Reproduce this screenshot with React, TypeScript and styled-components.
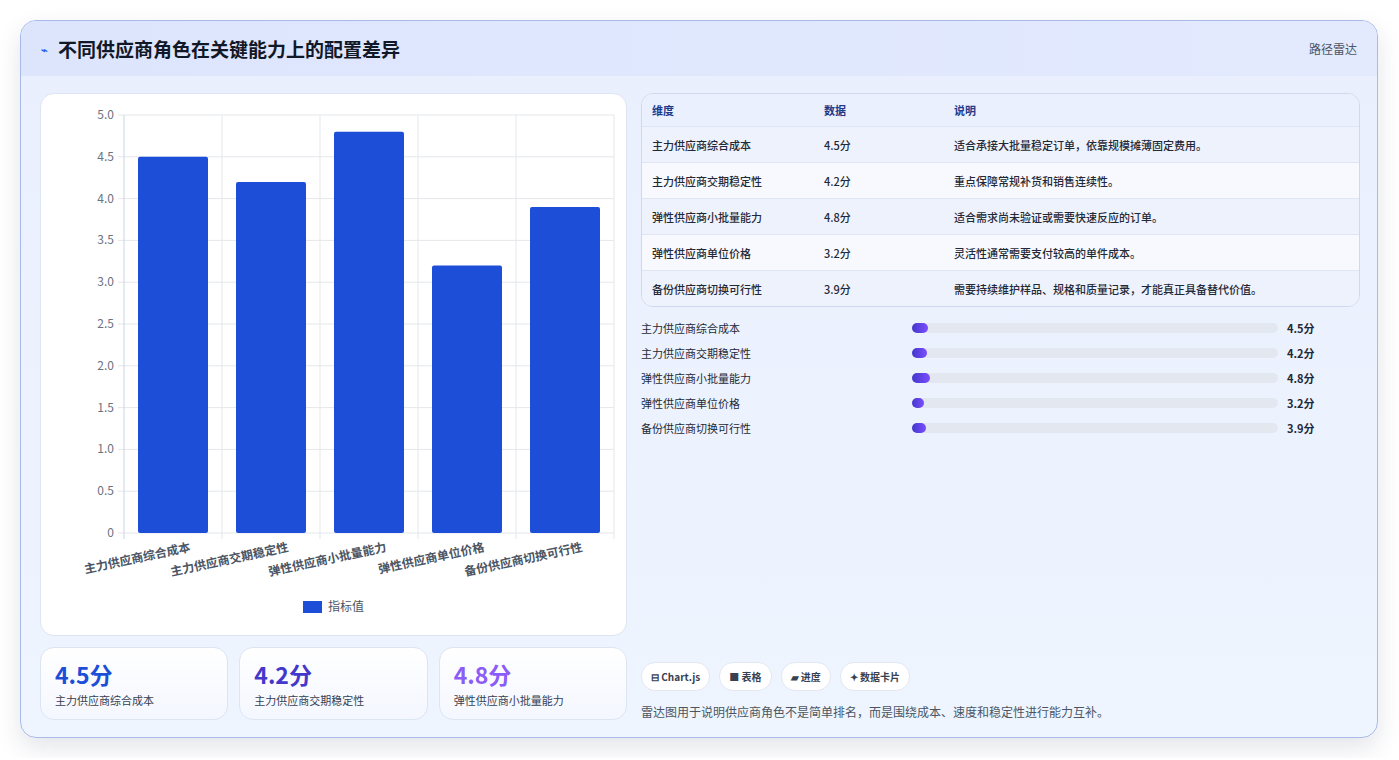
import React from 'react'
import styled, { createGlobalStyle } from 'styled-components'

const FONT = `"Noto Sans CJK SC", "Noto Sans", sans-serif`

const Global = createGlobalStyle`
  body { margin: 0; background: #ffffff; font-family: ${FONT}; }
`

const Page = styled.div`
  padding: 20px 21px 20px 20px;
`

const Panel = styled.div`
  border: 1px solid #a9b9ea;
  border-radius: 16px;
  background: linear-gradient(180deg, #e9effd 0%, #eef5ff 100%);
  box-shadow: 0 10px 24px rgba(30, 40, 80, 0.12);
  overflow: hidden;
  height: 718px;
  box-sizing: border-box;
`

const Header = styled.div`
  height: 55px;
  display: flex;
  align-items: center;
  justify-content: space-between;
  padding: 0 20px;
  background: linear-gradient(90deg, #dde5fd, #e3eafe);
`

const Title = styled.h1`
  margin: 0;
  font-size: 19px;
  font-weight: 700;
  color: #111827;
  display: flex;
  align-items: center;
  gap: 10px;
`

const Icon = styled.span`
  font-size: 11px;
  color: #2563eb;
`

const HeaderTag = styled.span`
  font-size: 12px;
  color: #4b5563;
`

const Body = styled.div`
  display: grid;
  grid-template-columns: 587px 1fr;
  gap: 14px;
  padding: 17px 17px 18px 19px;
`

const Col = styled.div`
  display: flex;
  flex-direction: column;
  gap: 11px;
`

const ChartCard = styled.div`
  height: 543px;
  background: #fff;
  border: 1px solid #dde4f2;
  border-radius: 14px;
  box-sizing: border-box;
`

const Stats = styled.div`
  display: grid;
  grid-template-columns: repeat(3, 1fr);
  gap: 11px;
`

const Stat = styled.div`
  height: 73px;
  box-sizing: border-box;
  border: 1px solid #dde4f2;
  border-radius: 14px;
  background: linear-gradient(180deg, #ffffff, #f4f7ff);
  padding: 10px 14px;
`

const StatValue = styled.div<{ $color: string }>`
  font-size: 23px;
  font-weight: 700;
  color: ${(p) => p.$color};
  line-height: 32px;
`

const StatLabel = styled.div`
  font-size: 11px;
  color: #374151;
  margin-top: 2px;
`

const Right = styled.div`
  display: flex;
  flex-direction: column;
`

const Table = styled.div`
  border: 1px solid #cfd8ee;
  border-radius: 12px;
  overflow: hidden;
  background: #f3f6fe;
`

const Row = styled.div<{ $head?: boolean; $alt?: boolean }>`
  display: grid;
  grid-template-columns: 172px 130px 1fr;
  height: ${(p) => (p.$head ? 32 : 35)}px;
  align-items: center;
  padding-left: 10px;
  font-size: 11px;
  font-weight: ${(p) => (p.$head ? 700 : 500)};
  color: ${(p) => (p.$head ? '#1e3a8a' : '#1f2937')};
  background: ${(p) => (p.$head ? '#eaf0fe' : p.$alt ? '#f7f9fe' : '#eef2fd')};
  border-top: ${(p) => (p.$head ? 'none' : '1px solid #dfe5f3')};
`

const Bars = styled.div`
  display: flex;
  flex-direction: column;
  gap: 7px;
  margin-top: 12px;
  padding-right: 33px;
`

const BarRow = styled.div`
  display: grid;
  grid-template-columns: 271px 1fr 40px;
  align-items: center;
  font-size: 11px;
  color: #1f2937;
  height: 18px;
`

const Track = styled.div`
  height: 10px;
  border-radius: 5px;
  background: #e3e7f0;
  margin-right: 9px;
`

const Fill = styled.div`
  height: 100%;
  border-radius: 5px;
  background: linear-gradient(90deg, #4338ca, #7c4dff);
`

const BarValue = styled.span`
  font-weight: 700;
`

const Chips = styled.div`
  margin-top: auto;
  display: flex;
  gap: 9px;
`

const Chip = styled.span`
  height: 27px;
  padding: 0 9px;
  border-radius: 14px;
  background: #fff;
  border: 1px solid #e2e7f2;
  display: flex;
  align-items: center;
  font-size: 10px;
  font-weight: 600;
  color: #374151;
`

const Note = styled.div`
  margin-top: 12px;
  font-size: 12px;
  color: #4b5563;
`

const items = [
  { name: '主力供应商综合成本', v: 4.5, desc: '适合承接大批量稳定订单，依靠规模摊薄固定费用。' },
  { name: '主力供应商交期稳定性', v: 4.2, desc: '重点保障常规补货和销售连续性。' },
  { name: '弹性供应商小批量能力', v: 4.8, desc: '适合需求尚未验证或需要快速反应的订单。' },
  { name: '弹性供应商单位价格', v: 3.2, desc: '灵活性通常需要支付较高的单件成本。' },
  { name: '备份供应商切换可行性', v: 3.9, desc: '需要持续维护样品、规格和质量记录，才能真正具备替代价值。' },
]

function BarChart() {
  const x0 = 83, x1 = 573, y0 = 21, y1 = 439
  const h = y1 - y0
  const cw = (x1 - x0) / 5
  const ticks = Array.from({ length: 11 }, (_, i) => i * 0.5)
  return (
    <svg width="585" height="541" style={{ display: 'block' }} fontFamily={FONT}>
      {ticks.map((t) => {
        const y = y1 - (t / 5) * h
        return (
          <g key={t}>
            <line x1={x0 - 6} x2={x1} y1={y} y2={y} stroke="#e5e7eb" />
            <text x={x0 - 10} y={y + 4} fontSize="12" fill="#6b7280" textAnchor="end">
              {t === 0 ? '0' : t.toFixed(1)}
            </text>
          </g>
        )
      })}
      {[0, 1, 2, 3, 4, 5].map((i) => (
        <line key={i} x1={x0 + i * cw} x2={x0 + i * cw} y1={y0} y2={y1 + 6} stroke={i === 0 ? '#cbd5e1' : '#e5e7eb'} />
      ))}
      {items.map((it, i) => {
        const bh = (it.v / 5) * h
        const cx = x0 + i * cw + cw / 2
        return (
          <g key={it.name}>
            <rect x={cx - 35} y={y1 - bh} width={70} height={bh} rx={2} fill="#1d4ed8" />
            <text
              x={cx + 18}
              y={y1 + 18}
              fontSize="12"
              fontWeight="600"
              fill="#4b5563"
              textAnchor="end"
              transform={`rotate(-12 ${cx + 18} ${y1 + 18})`}
            >
              {it.name}
            </text>
          </g>
        )
      })}
      <rect x={262} y={507} width={19} height={12} fill="#1d4ed8" />
      <text x={287} y={517} fontSize="12" fill="#4b5563">指标值</text>
    </svg>
  )
}

export default function App() {
  return (
    <Page>
      <Global />
      <Panel>
        <Header>
          <Title>
            <Icon>⌁</Icon>不同供应商角色在关键能力上的配置差异
          </Title>
          <HeaderTag>路径雷达</HeaderTag>
        </Header>
        <Body>
          <Col>
            <ChartCard>
              <BarChart />
            </ChartCard>
            <Stats>
              <Stat>
                <StatValue $color="#1d4ed8">4.5分</StatValue>
                <StatLabel>主力供应商综合成本</StatLabel>
              </Stat>
              <Stat>
                <StatValue $color="#4338ca">4.2分</StatValue>
                <StatLabel>主力供应商交期稳定性</StatLabel>
              </Stat>
              <Stat>
                <StatValue $color="#8b5cf6">4.8分</StatValue>
                <StatLabel>弹性供应商小批量能力</StatLabel>
              </Stat>
            </Stats>
          </Col>
          <Right>
            <Table>
              <Row $head>
                <span>维度</span>
                <span>数据</span>
                <span>说明</span>
              </Row>
              {items.map((it, i) => (
                <Row key={it.name} $alt={i % 2 === 1}>
                  <span>{it.name}</span>
                  <span>{it.v}分</span>
                  <span>{it.desc}</span>
                </Row>
              ))}
            </Table>
            <Bars>
              {items.map((it) => (
                <BarRow key={it.name}>
                  <span>{it.name}</span>
                  <Track>
                    <Fill style={{ width: `${it.v}%` }} />
                  </Track>
                  <BarValue>{it.v}分</BarValue>
                </BarRow>
              ))}
            </Bars>
            <Chips>
              <Chip>⊟ Chart.js</Chip>
              <Chip>■ 表格</Chip>
              <Chip>▰ 进度</Chip>
              <Chip>✦ 数据卡片</Chip>
            </Chips>
            <Note>雷达图用于说明供应商角色不是简单排名，而是围绕成本、速度和稳定性进行能力互补。</Note>
          </Right>
        </Body>
      </Panel>
    </Page>
  )
}
